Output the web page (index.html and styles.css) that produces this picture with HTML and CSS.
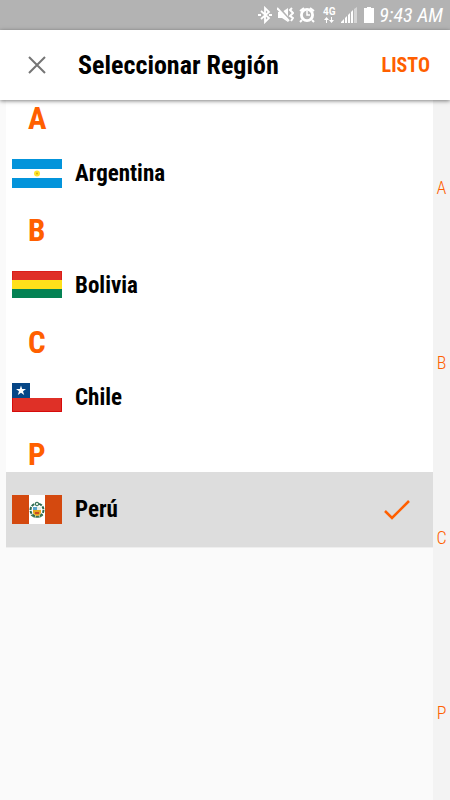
FILE: index.html
```html
<!DOCTYPE html>
<html lang="es">
<head>
<meta charset="utf-8">
<meta name="viewport" content="width=device-width, initial-scale=1">
<title>Seleccionar Región</title>
<link rel="stylesheet" href="styles.css">
</head>
<body>
<div class="status">
  <svg width="14" height="18" viewBox="0 0 14 18" fill="none" stroke="#fff" stroke-width="1.8"><path d="M3 5l8 7-4 4V2l4 4-8 7"/><path d="M0 9h3M11 9h3" stroke-width="2"/></svg>
  <svg class="mute" width="17" height="18" viewBox="0 0 17 18"><path d="M1 6h4l6-4v14l-6-4H1z" fill="#fff"/><path d="M1 1l12 14" stroke="#b3b3b3" stroke-width="3"/><path d="M0 2l12 13" stroke="#fff" stroke-width="2"/><path d="M15 2l-2 2 3 3-3 3 3 2-2 3" fill="none" stroke="#fff" stroke-width="2"/></svg>
  <svg width="16" height="18" viewBox="0 0 16 18"><circle cx="8" cy="9" r="7" fill="#fff"/><path d="M1 5l4-3M11 2l4 3M3 14l-2 2M13 14l2 2" stroke="#fff" stroke-width="2"/><circle cx="8" cy="9" r="4.200" fill="#b3b3b3"/><path d="M8 5v4h3" fill="none" stroke="#fff" stroke-width="1.500"/></svg>
  <span class="network"><span>4G</span><svg width="10" height="6" viewBox="0 0 10 6" fill="#fff"><path d="M2 6V3H0l2.500-3L5 3H3v3zM7 0v3H5l2.500 3L10 3H8V0z"/></svg></span>
  <svg width="16" height="18" viewBox="0 0 16 18" fill="#fff"><path d="M0 17v-1l3-3v4zM4 17v-5l2-2v7zM7 17V9l2-2v10zM10 17V6l2-2v13z"/><path d="M13 17V3l3-2v16z" opacity=".45"/></svg>
  <svg class="battery" width="10" height="18" viewBox="0 0 10 18" fill="#fff"><path d="M3 1h4v1h3v15H0V2h3z"/></svg>
  <time class="clock">9:43 AM</time>
</div>
<header class="bar">
  <button class="close" aria-label="Cerrar"><svg width="18" height="18" viewBox="0 0 18 18" fill="none" stroke="#757575" stroke-width="2"><path d="M1 1l16 16M17 1L1 17"/></svg></button>
  <h1 class="title">Seleccionar Región</h1>
  <button class="done">LISTO</button>
</header>
<div class="content">
  <main class="list">
    <h2 class="letter">A</h2>
    <button class="row">
      <svg class="flag" viewBox="0 0 50 30"><path fill="#fff" d="M0 0h50v30H0z"/><path fill="#0394db" d="M0 0h50v10H0zM0 19h50v10H0z"/><circle cx="25" cy="14.500" r="3" fill="#ffe52b"/><circle cx="25" cy="14.500" r="1" fill="#d5aa10"/></svg>
      <span>Argentina</span>
    </button>
    <h2 class="letter">B</h2>
    <button class="row">
      <svg class="flag" viewBox="0 0 50 30"><path fill="#df3027" d="M0 0h50v9H0z"/><path fill="#ffe01a" d="M0 9h50v9H0z"/><path fill="#048254" d="M0 18h50v9H0z"/><path fill="none" stroke="#d60b0b" stroke-opacity=".5" d="M.5 9V.5h49V9"/></svg>
      <span>Bolivia</span>
    </button>
    <h2 class="letter">C</h2>
    <button class="row">
      <svg class="flag" viewBox="0 0 50 30"><path fill="#fff" d="M17 0h33v15H17z"/><path fill="#df3027" d="M0 15h50v14H0z"/><path fill="#064686" d="M0 0h18v15H0z"/><path fill="none" stroke="#d60b0b" d="M.5 15v13.500h49V15"/><path fill="#fff" d="M9 2.500l1.200 3.500H14l-3 2.200 1.200 3.800L9 9.700 5.800 12 7 8.200 4 6h3.800z"/></svg>
      <span>Chile</span>
    </button>
    <h2 class="letter">P</h2>
    <button class="row selected" aria-pressed="true">
      <svg class="flag" viewBox="0 0 50 30"><path fill="#fff" d="M16 0h18v29H16z"/><path fill="#d4490f" d="M0 0h17v29H0zM33 0h17v29H33z"/><circle cx="25" cy="15" r="6.500" fill="none" stroke="#2c6b50" stroke-width="2" stroke-dasharray="3 1"/><circle cx="25" cy="9" r="1.800" fill="#dcebdc" stroke="#2c6b50"/><path fill="#5ba4ce" d="M21 12h4v3h-4z"/><path fill="#e9eee5" d="M25 12h4v3h-4z"/><path fill="#e4a91f" d="M21 15h8v2q0 3-4 4-4-1-4-4z"/><path fill="#c74b25" d="M23 17h4v2h-4z"/><path d="M19 20l3 2h6l3-2" fill="none" stroke="#487d54" stroke-width="1.200"/></svg>
      <span>Perú</span>
      <svg class="check" width="26" height="20" viewBox="0 0 26 20" fill="none" stroke="#ff5f00" stroke-width="2.500"><path d="M1 11l7 7L25 1"/></svg>
    </button>
  </main>
  <nav class="index" aria-label="Índice">
    <a href="#">A</a><a href="#">B</a><a href="#">C</a><a href="#">P</a>
  </nav>
</div>
</body>
</html>
```
FILE: styles.css
```css
* { box-sizing: border-box; }
body {
  margin: 0;
  min-height: 100vh;
  display: flex;
  flex-direction: column;
  background: #fafafa;
  color: #000;
  font-family: "Roboto Condensed", "Liberation Sans Narrow", "Liberation Sans", sans-serif;
}
button {
  border: 0;
  padding: 0;
  background: none;
  color: inherit;
  font: inherit;
  cursor: pointer;
}
.status {
  height: 30px;
  padding-right: 7px;
  display: flex;
  align-items: center;
  justify-content: flex-end;
  gap: 5px;
  background: #b3b3b3;
  color: #fff;
}
.network {
  width: 14px;
  margin-left: 2px;
  display: flex;
  flex-direction: column;
  align-items: center;
  font: bold 10px/10px Roboto, sans-serif;
}
.battery { margin-left: 2px; }
.clock { font-size: 20px; font-style: italic; line-height: 30px; }
.bar {
  position: relative;
  height: 70px;
  padding: 0 20px 0 28px;
  display: flex;
  align-items: center;
  background: #fff;
  box-shadow: 0 1px 4px rgba(0, 0, 0, .5);
}
.close { display: flex; }
.title { flex: 1; margin: 0 0 0 32px; font-size: 26px; font-weight: bold; }
.done { color: #ff5f00; font-size: 20px; font-weight: bold; }
.content { flex: 1; display: flex; align-items: stretch; }
.list { flex: 1; margin-left: 6px; }
.letter {
  height: 36px;
  margin: 0;
  padding-left: 22px;
  background: #fff;
  color: #ff5f00;
  font-size: 31px;
  line-height: 38px;
}
.row {
  width: 100%;
  height: 76px;
  padding: 0 23px 0 6px;
  display: flex;
  align-items: center;
  gap: 13px;
  background: #fff;
  border-bottom: 1px solid #fff;
  font-size: 23px;
  font-weight: bold;
  text-align: left;
}
.row.selected { background: #ddd; border-color: #eee; }
.flag { width: 50px; height: 30px; }
.check { margin-left: auto; }
.index {
  width: 17px;
  display: flex;
  flex-direction: column;
  background: #f3f3f3;
}
.index a {
  flex: 1;
  display: flex;
  align-items: center;
  justify-content: center;
  color: #ff5f00;
  font-family: "Roboto Condensed", Roboto, sans-serif;
  font-size: 18px;
  font-weight: 300;
  text-decoration: none;
}
```
